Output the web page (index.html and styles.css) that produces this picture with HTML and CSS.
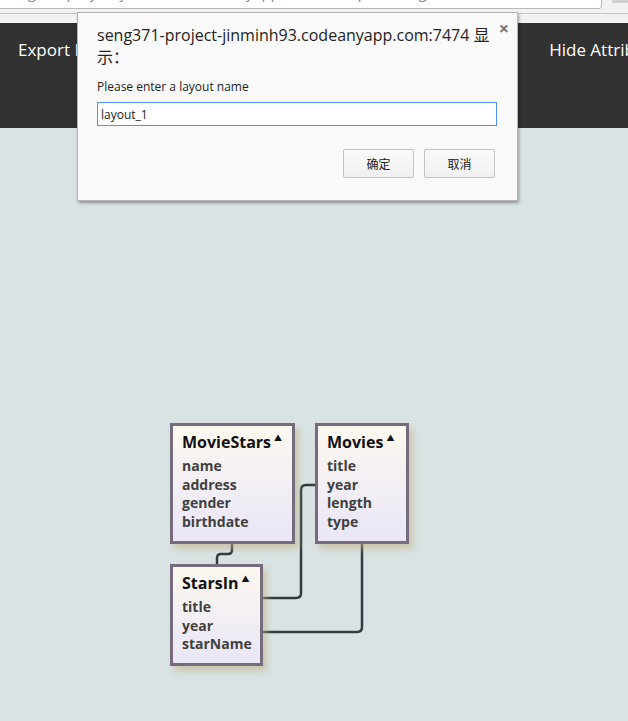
FILE: index.html
```html
<!DOCTYPE html>
<html>
<head>
<meta charset="utf-8">
<link rel="stylesheet" href="styles.css">
</head>
<body>
<div class="chrome">
  <div class="omnibox"><span class="url">seng371-project-jinminh93.codeanyapp.com:7474/process_getxml</span><span class="star">★</span></div>
  <div class="menu-stub"></div>
</div>
<div class="toolbar">
  <span class="tool">Export Diagram</span>
  <span class="tool right">Hide Attributes</span>
</div>
<div class="canvas">
  <svg class="links" width="628" height="721" viewBox="0 0 628 721">
    <path d="M232 544 V550 Q232 554 228 554 H221 Q217 554 217 558 V564" />
    <path d="M263 598 H296 Q301 598 301 593 V490 Q301 485 306 485 H315" />
    <path d="M263 632 H357 Q362 632 362 627 V544" />
  </svg>
  <div class="node n-moviestars">
    <div class="node-title">MovieStars<span class="caret">▲</span></div>
    <div class="attr">name</div>
    <div class="attr">address</div>
    <div class="attr">gender</div>
    <div class="attr">birthdate</div>
  </div>
  <div class="node n-movies">
    <div class="node-title">Movies<span class="caret">▲</span></div>
    <div class="attr">title</div>
    <div class="attr">year</div>
    <div class="attr">length</div>
    <div class="attr">type</div>
  </div>
  <div class="node n-starsin">
    <div class="node-title">StarsIn<span class="caret">▲</span></div>
    <div class="attr">title</div>
    <div class="attr">year</div>
    <div class="attr">starName</div>
  </div>
</div>
<div class="dialog">
  <span class="close">×</span>
  <div class="dlg-title">seng371-project-jinminh93.codeanyapp.com:7474 显示：</div>
  <div class="dlg-msg">Please enter a layout name</div>
  <input class="dlg-input" type="text" value="layout_1">
  <div class="dlg-buttons">
    <button class="btn">确定</button>
    <button class="btn">取消</button>
  </div>
</div>
</body>
</html>
```
FILE: styles.css
```css
html, body {
  margin: 0;
  padding: 0;
  width: 628px;
  height: 721px;
  overflow: hidden;
  background: #dae3e4;
  font-family: "Open Sans", "Noto Sans", "Noto Sans CJK SC", sans-serif;
}

.chrome {
  position: relative;
  height: 23px;
  background: #f2f2f2;
  box-sizing: border-box;
}
.chrome::after {
  content: "";
  position: absolute;
  left: 0; right: 0; top: 13px;
  height: 1px;
  background: #c4c4c4;
}
.omnibox {
  position: absolute;
  left: -4px;
  top: -12px;
  width: 606px;
  height: 21px;
  background: #fff;
  border: 1px solid #b9b9b9;
  border-radius: 0 0 3px 0;
  box-sizing: border-box;
  font-size: 15px;
  line-height: 18px;
  color: #8a8a8a;
  white-space: nowrap;
  overflow: hidden;
  padding-left: 6px;
}
.omnibox .url { position: relative; top: -6px; }
.omnibox .star {
  position: absolute;
  right: 12px;
  top: -8px;
  color: #666;
  font-size: 16px;
}
.menu-stub {
  position: absolute;
  right: 0;
  top: 0;
  width: 16px;
  height: 3px;
  background: #cfcfcf;
}

.toolbar {
  height: 105px;
  background: #323232;
  display: flex;
  justify-content: space-between;
  padding: 15px 0 0 18px;
  box-sizing: border-box;
  white-space: nowrap;
  overflow: hidden;
}
.tool {
  color: #fff;
  font-size: 17px;
  line-height: 24px;
}
.tool.right { margin-right: -41px; }

.canvas {
  position: relative;
  height: 593px;
}
.links {
  position: absolute;
  left: 0;
  top: -128px;
}
.links path {
  fill: none;
  stroke: #323c43;
  stroke-width: 2.5;
}

.node {
  position: absolute;
  box-sizing: border-box;
  border: 3px solid #776c7d;
  background: linear-gradient(#fdf8ef, #e9e6f8);
  box-shadow: 4px 5px 6px rgba(190, 176, 130, 0.55);
  padding: 1px 0 0 9px;
  color: #404040;
}
.n-moviestars { left: 170px; top: 295px; width: 125px; height: 121px; }
.n-movies { left: 315px; top: 295px; width: 94px; height: 121px; }
.n-starsin { left: 170px; top: 436px; width: 93px; height: 102px; }

.node-title {
  font-weight: bold;
  font-size: 16px;
  line-height: 22px;
  color: #111;
  margin-bottom: 4px;
}
.caret {
  font-size: 8px;
  vertical-align: 7px;
  margin-left: 3px;
}
.attr {
  font-weight: bold;
  font-size: 14px;
  line-height: 18.5px;
}

.dialog {
  position: absolute;
  left: 77px;
  top: 12px;
  width: 441px;
  height: 189px;
  box-sizing: border-box;
  background: #fafafa;
  border: 1px solid #b5b5b5;
  box-shadow: 1px 2px 3px rgba(0,0,0,0.35);
  padding: 11px 20px 0 19px;
}
.close {
  position: absolute;
  right: 8px;
  top: 3px;
  font-size: 18px;
  font-weight: bold;
  color: #777;
}
.dlg-title {
  font-size: 16px;
  line-height: 22px;
  color: #222;
}
.dlg-msg {
  font-size: 12px;
  line-height: 16px;
  color: #222;
  margin-top: 11px;
}
.dlg-input {
  display: block;
  margin-top: 7px;
  width: 400px;
  height: 24px;
  box-sizing: border-box;
  border: 1px solid #4d90fe;
  background: #fff;
  font-family: inherit;
  font-size: 12px;
  color: #222;
  padding: 0 3px;
  outline: none;
}
.dlg-buttons {
  display: flex;
  justify-content: flex-end;
  gap: 10px;
  margin-top: 23px;
  padding-right: 2px;
}
.btn {
  width: 71px;
  height: 29px;
  border: 1px solid #c3c3c3;
  border-radius: 2px;
  background: linear-gradient(#fafafa, #f0f0f0);
  font-family: "Noto Sans CJK SC", sans-serif;
  font-size: 12px;
  color: #222;
}
```
